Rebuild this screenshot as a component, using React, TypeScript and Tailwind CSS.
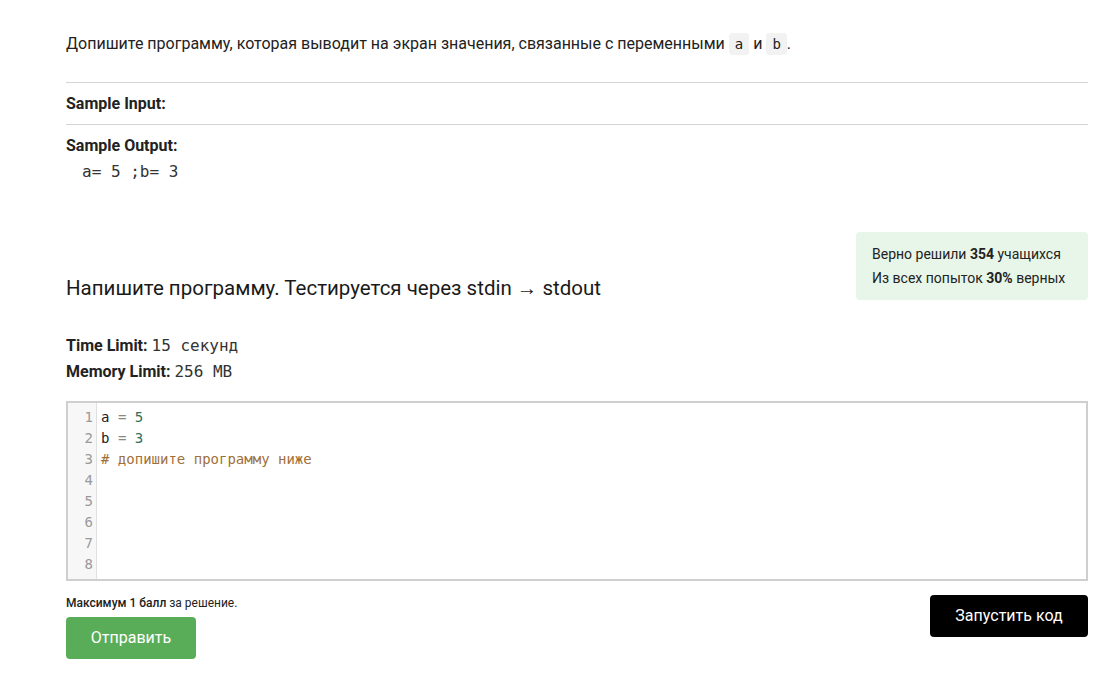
const mono = "font-['DejaVu_Sans_Mono',monospace]";

function CodeLine({ n, children }: { n: number; children?: React.ReactNode }) {
  return (
    <div className="flex h-[21px] items-center">
      <div className="w-[29px] shrink-0 pr-[4px] text-right text-[#999]">{n}</div>
      <div className="pl-[4px] whitespace-pre">{children}</div>
    </div>
  );
}

export default function App() {
  return (
    <div className="min-h-screen bg-white font-['Roboto',sans-serif] text-[#222]">
      <div className="mx-[66px] mr-[17px] pt-[33px]">
        <p className="text-[16px] leading-[22px]">
          Допишите программу, которая выводит на экран значения, связанные с переменными{" "}
          <code className={`${mono} rounded-[3px] bg-[#f2f2f2] px-[6px] py-[3px] text-[14px]`}>a</code> и{" "}
          <code className={`${mono} rounded-[3px] bg-[#f2f2f2] px-[6px] py-[3px] text-[14px]`}>b</code>.
        </p>

        <div className="mt-[27px] border-t border-[#d4d4d4] pt-[10px] pb-[9px]">
          <div className="text-[16px] font-bold leading-[22px]">Sample Input:</div>
        </div>
        <div className="border-t border-[#d4d4d4] pt-[10px]">
          <div className="text-[16px] font-bold leading-[22px]">Sample Output:</div>
          <pre className={`${mono} mt-[4px] pl-[16px] text-[16px] leading-[22px] text-[#333]`}>a= 5 ;b= 3</pre>
        </div>

        <div className="mt-[49px] flex items-start justify-between">
          <h2 className="mt-[42px] text-[20.5px] font-normal leading-[28px] text-[#1a1a1a]">
            Напишите программу. Тестируется через stdin → stdout
          </h2>
          <div className="w-[232px] rounded-[4px] bg-[#e8f6e9] px-[16px] py-[10px] text-[14px] leading-[24px]">
            <div>
              Верно решили <b>354</b> учащихся
            </div>
            <div>
              Из всех попыток <b>30%</b> верных
            </div>
          </div>
        </div>

        <div className="mt-[31px] text-[16px] leading-[26px]">
          <div>
            <b>Time Limit:</b> <span className={`${mono} text-[#333]`}>15 секунд</span>
          </div>
          <div>
            <b>Memory Limit:</b> <span className={`${mono} text-[#333]`}>256 MB</span>
          </div>
        </div>

        <div className={`${mono} mt-[16px] flex border-2 border-[#cfcfcf] text-[14px]`}>
          <div className="flex w-full flex-col py-[4px]">
            <div className="relative">
              <div className="absolute inset-y-[-4px] left-0 w-[29px] border-r border-[#e0e0e0] bg-[#f7f7f7]" />
              <div className="relative">
                <CodeLine n={1}>
                  <span className="text-[#222]">a</span> <span className="text-[#888]">=</span>{" "}
                  <span className="text-[#2f6f5a]">5</span>
                </CodeLine>
                <CodeLine n={2}>
                  <span className="text-[#222]">b</span> <span className="text-[#888]">=</span>{" "}
                  <span className="text-[#2f6f5a]">3</span>
                </CodeLine>
                <CodeLine n={3}>
                  <span className="text-[#a0703a]"># допишите программу ниже</span>
                </CodeLine>
                <CodeLine n={4} />
                <CodeLine n={5} />
                <CodeLine n={6} />
                <CodeLine n={7} />
                <CodeLine n={8} />
              </div>
            </div>
          </div>
        </div>

        <div className="mt-[14px] flex items-start justify-between">
          <div>
            <div className="text-[12px] leading-[16px]">
              <span className="font-medium">Максимум 1 балл</span> за решение.
            </div>
            <button className="mt-[6px] h-[42px] w-[130px] rounded-[4px] bg-[#5aad58] text-[16px] text-white">
              Отправить
            </button>
          </div>
          <button className="h-[42px] w-[158px] rounded-[4px] bg-black text-[16px] text-white">
            Запустить код
          </button>
        </div>
      </div>
    </div>
  );
}
